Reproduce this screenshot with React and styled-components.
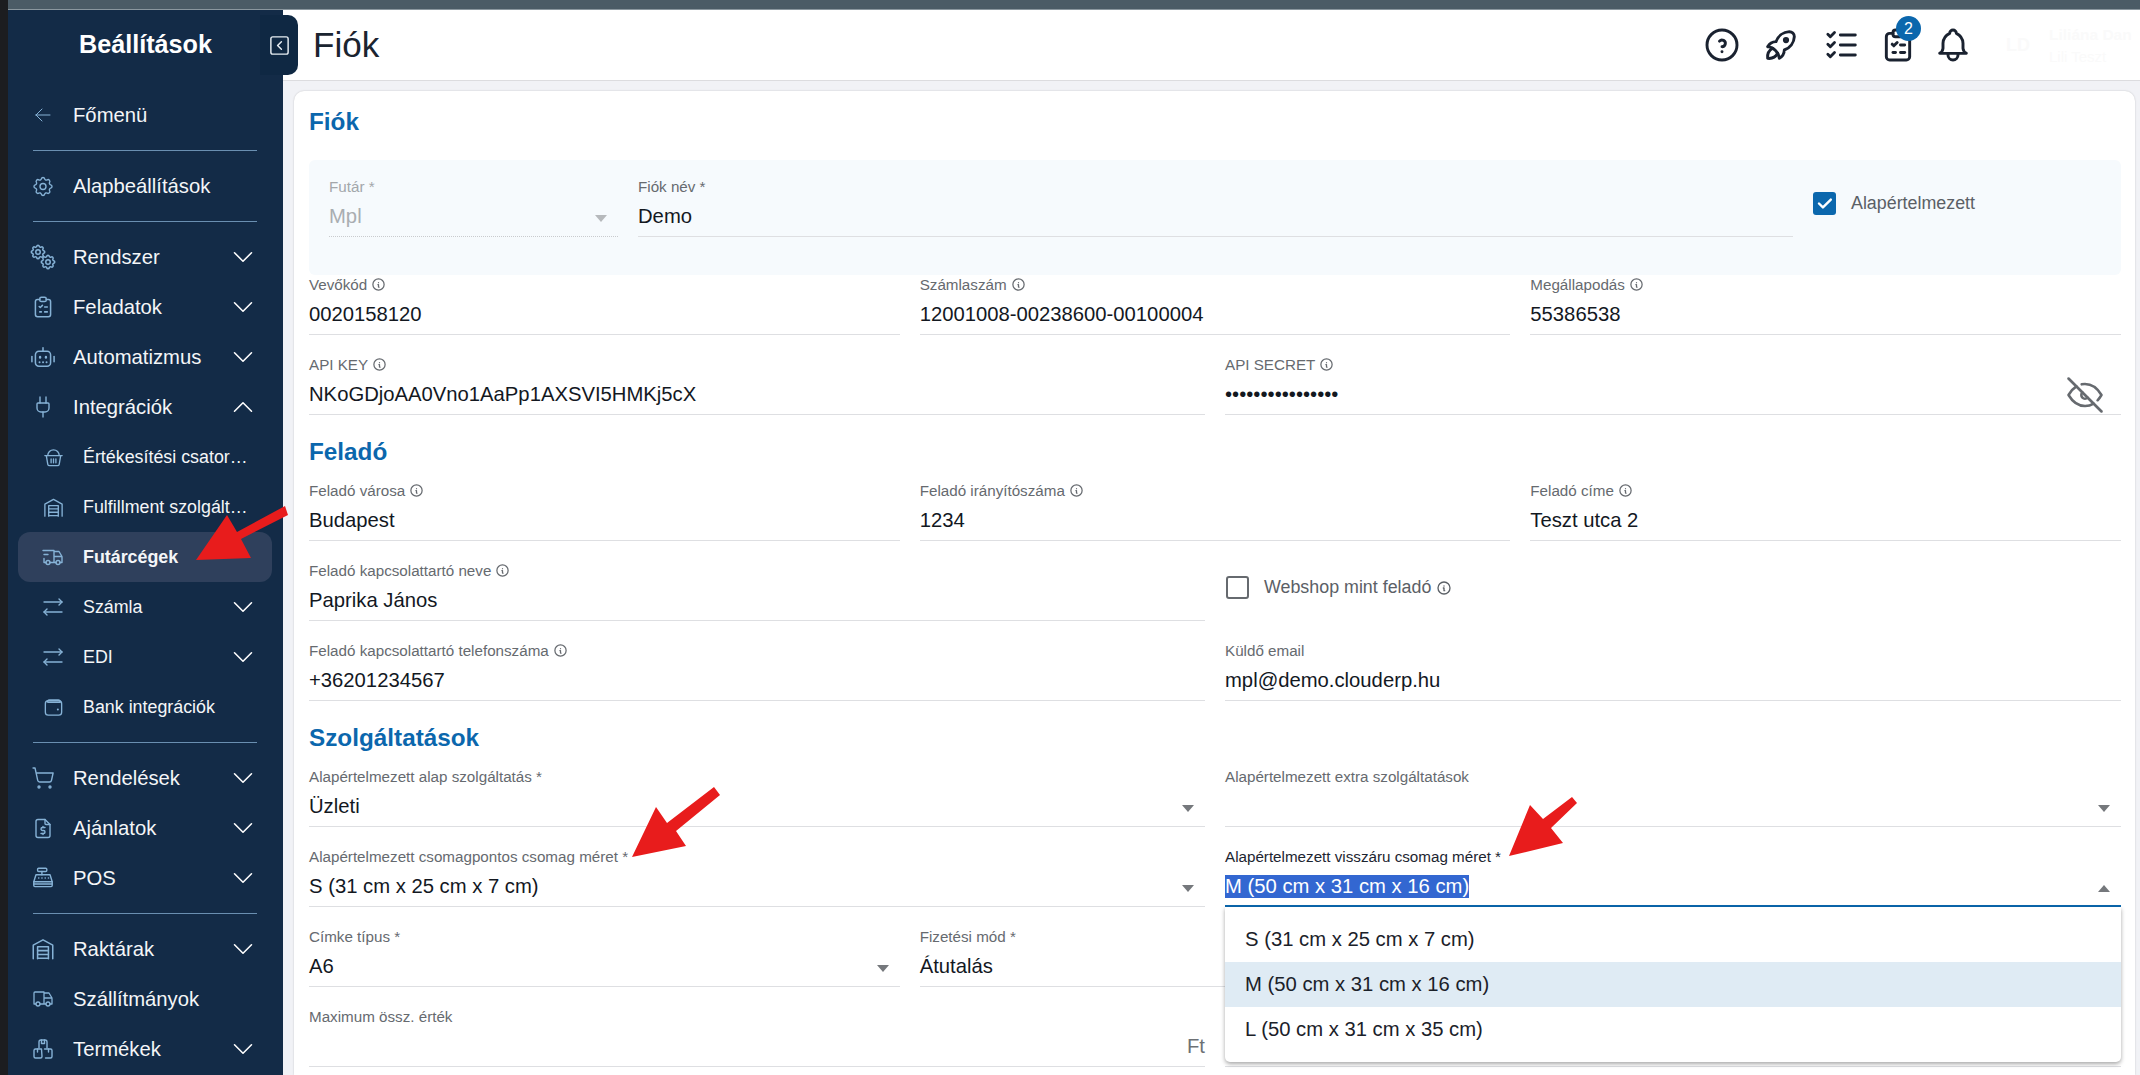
import React from "react";
import styled, { createGlobalStyle } from "styled-components";
import {
  TbSettings,
  TbFileDollar,
  TbTruckDelivery,
  TbArrowsRightLeft,
  TbTruck,
  TbHelpCircle,
  TbRocket,
  TbListCheck,
  TbBell,
  TbInfoCircle,
  TbEyeOff,
  TbCheck,
  TbArrowLeft,
} from "react-icons/tb";
import { ChevronDown, ChevronUp, Plug, ShoppingCart, SquareChevronLeft } from "lucide-react";

const GlobalStyle = createGlobalStyle`
  html, body {
    margin: 0;
    height: 100%;
    overflow: hidden;
    background: #1c1d20;
  }
  * {
    box-sizing: border-box;
  }
`;

const Shell = styled.div`
  position: relative;
  width: 2140px;
  height: 1075px;
  padding-left: 8px;
  display: flex;
  flex-direction: column;
  overflow: hidden;
  font-family: "Liberation Sans", Arial, sans-serif;
`;

const TopStrip = styled.div`
  height: 10px;
  flex: none;
  background: #4b5b66;
  border-bottom: 1px solid #8b979f;
`;

const Body = styled.div`
  flex: 1;
  display: flex;
  min-height: 0;
`;

const Sidebar = styled.aside`
  position: relative;
  width: 275px;
  flex: none;
  background: #132b47;
  color: #f4f6f8;
`;

const SideTitle = styled.div`
  height: 68px;
  display: flex;
  align-items: center;
  justify-content: center;
  font-size: 25.2px;
  font-weight: 700;
  color: #fff;
`;

const CollapseTab = styled.div`
  position: absolute;
  top: 5px;
  left: 252px;
  width: 38px;
  height: 60px;
  border-radius: 0 10px 10px 0;
  background: #0f2843;
  color: #e8eef3;
  display: flex;
  align-items: center;
  justify-content: center;
  z-index: 3;
`;

const SideNav = styled.nav`
  padding-top: 12px;
`;

const NavRow = styled.div`
  height: 50px;
  margin: 0 11px 0 10px;
  padding: 0 ${(p) => (p.$hasArrow ? "12px" : "24px")} 0 ${(p) => (p.$sub ? "23px" : "13px")};
  display: flex;
  align-items: center;
  gap: 18px;
  border-radius: 12px;
  font-size: ${(p) => (p.$sub ? "17.85px" : "20.25px")};
  font-weight: ${(p) => (p.$active ? 700 : 400)};
  background: ${(p) => (p.$active ? "#2f405c" : "transparent")};
`;

const NavIcon = styled.span`
  width: 24px;
  height: 24px;
  flex: none;
  display: flex;
  align-items: center;
  justify-content: center;
  color: #86b2d6;
`;

const NavText = styled.span`
  flex: 1;
  min-width: 0;
  white-space: nowrap;
  overflow: hidden;
  text-overflow: ellipsis;
`;

const NavArrow = styled.span`
  width: 34px;
  height: 34px;
  flex: none;
  display: flex;
  align-items: center;
  justify-content: center;
  color: #fff;
`;

const SideDivider = styled.hr`
  margin: 10px 26px 10px 25px;
  border: none;
  height: 1px;
  background: #6a8fb1;
`;

const Main = styled.main`
  flex: 1;
  min-width: 0;
  display: flex;
  flex-direction: column;
`;

const Header = styled.header`
  height: 71px;
  flex: none;
  padding-left: 30px;
  display: flex;
  align-items: center;
  background: #fff;
  border-bottom: 1px solid #dcdcdf;
`;

const PageTitle = styled.h1`
  margin: 0;
  font-size: 35.1px;
  font-weight: 400;
  color: #1b2430;
`;

const HeaderIcons = styled.div`
  margin-left: auto;
  display: flex;
  align-items: center;
  color: #1a2230;
`;

const HeaderIcon = styled.span`
  position: relative;
  width: 40px;
  height: 40px;
  margin-left: ${(p) => p.$gap || 0}px;
  display: flex;
  align-items: center;
  justify-content: center;
`;

const Badge = styled.span`
  position: absolute;
  top: -9px;
  right: -3px;
  width: 25px;
  height: 25px;
  border-radius: 50%;
  background: #0b67ad;
  color: #fff;
  font-size: 16px;
  display: flex;
  align-items: center;
  justify-content: center;
`;

const UserBox = styled.div`
  width: 134px;
  margin-left: 33px;
  display: flex;
  align-items: center;
  gap: 19px;
  color: #fafafa;
`;

const UserInitials = styled.span`
  font-size: 18px;
  font-weight: 700;
`;

const UserName = styled.div`
  font-size: 15.5px;
  font-weight: 700;
  line-height: 24px;
  white-space: nowrap;
`;

const UserCompany = styled.div`
  font-size: 15px;
  line-height: 20px;
  white-space: nowrap;
`;

const Content = styled.div`
  flex: 1;
  min-height: 0;
  padding: 10px 5px 0 11px;
  background: #f1f2f6;
`;

const Card = styled.section`
  height: 100%;
  padding: 0 14px 0 15px;
  background: #fff;
  border-radius: 10px 10px 0 0;
  box-shadow: 0 0 2px rgba(0, 0, 0, 0.2);
`;

const CardTitle = styled.h2`
  margin: 0;
  height: 69px;
  padding-bottom: 7px;
  display: flex;
  align-items: center;
  font-size: 24.3px;
  font-weight: 700;
  color: #0b67ad;
`;

const SectionTitle = styled.h2`
  margin: 0;
  padding: 25px 0 16px;
  font-size: 24.3px;
  line-height: 24px;
  font-weight: 700;
  color: #0b67ad;
`;

const Panel = styled.div`
  height: 115px;
  padding: 16px 20px;
  margin-bottom: -1px;
  display: grid;
  grid-template-columns: 289px 1155px 1fr;
  gap: 20px;
  background: #f6fafd;
  border-radius: 6px;
`;

const Row = styled.div`
  display: grid;
  grid-template-columns: repeat(${(p) => p.$cols}, 1fr);
  column-gap: 20px;
  margin-bottom: ${(p) => (p.$last ? 0 : 19)}px;
`;

const FieldBox = styled.div`
  position: relative;
  height: 61px;
`;

const Label = styled.div`
  height: 20px;
  display: flex;
  align-items: center;
  gap: 4px;
  font-size: 15.2px;
  white-space: nowrap;
  color: ${(p) => (p.$focused ? "#1d2530" : p.$disabled ? "#a3a7ab" : "#666a6f")};
`;

const ValueLine = styled.div`
  position: relative;
  height: 41px;
  padding-top: 1px;
  display: flex;
  align-items: center;
  font-size: 20.25px;
  white-space: nowrap;
  color: ${(p) => (p.$disabled ? "#a9adb1" : "#13181f")};
  border-bottom: ${(p) =>
    p.$focused ? "2px solid #0b67ad" : p.$disabled ? "1px dotted #c9cbce" : "1px solid #dedfe2"};
`;

const Selected = styled.span`
  height: 23px;
  line-height: 23px;
  background: #3367d1;
  color: #fff;
`;

const Adornment = styled.span`
  margin-left: auto;
  color: #6d7175;
`;

const Triangle = styled.span`
  position: absolute;
  right: 11px;
  top: 19px;
  width: 0;
  height: 0;
  border-left: 6px solid transparent;
  border-right: 6px solid transparent;
  border-top: ${(p) => (p.$up ? "0" : `7px solid ${p.$disabled ? "#b6b9bc" : "#75787c"}`)};
  border-bottom: ${(p) => (p.$up ? "7px solid #75787c" : "0")};
`;

const EyeButton = styled.span`
  position: absolute;
  right: 14px;
  top: -1px;
  color: #666a6f;
  display: flex;
`;

const CheckWrap = styled.label`
  display: flex;
  align-items: center;
  gap: 15px;
  font-size: 17.85px;
  color: #5b6066;
`;

const CheckBoxMark = styled.span`
  width: 23px;
  height: 23px;
  flex: none;
  border-radius: 3px;
  display: flex;
  align-items: center;
  justify-content: center;
  color: #fff;
  background: ${(p) => (p.$checked ? "#0b67ad" : "transparent")};
  border: ${(p) => (p.$checked ? "none" : "2px solid #666a6f")};
`;

const PanelCheck = styled(CheckWrap)`
  height: 23px;
  margin-top: 16px;
`;

const RowCheck = styled(CheckWrap)`
  height: 61px;
  padding: 0 0 6px 1px;
  gap: 5px;
`;

const RowCheckText = styled.span`
  margin-left: 10px;
  display: flex;
  align-items: center;
  gap: 5px;
`;

const Menu = styled.ul`
  position: absolute;
  top: 100%;
  left: 0;
  right: 0;
  margin: 0;
  padding: 10px 0;
  list-style: none;
  background: #fff;
  border-radius: 0 0 5px 5px;
  box-shadow: 0 2px 4px rgba(0, 0, 0, 0.35);
  z-index: 2;
`;

const MenuItem = styled.li`
  height: 45px;
  padding-left: 20px;
  display: flex;
  align-items: center;
  font-size: 20.25px;
  color: #1b2129;
  background: ${(p) => (p.$selected ? "#dfebf4" : "transparent")};
`;

const ArrowLayer = styled.svg`
  position: absolute;
  inset: 0;
  width: 2140px;
  height: 1075px;
  pointer-events: none;
  z-index: 5;
`;

const Line = ({ size = 24, sw = 1.5, children }) => (
  <svg
    width={size}
    height={size}
    viewBox="0 0 24 24"
    fill="none"
    stroke="currentColor"
    strokeWidth={sw}
    strokeLinecap="round"
    strokeLinejoin="round"
    style={{ flex: "none" }}
  >
    {children}
  </svg>
);

const GearsIcon = () => (
  <svg width="28" height="28" viewBox="0 0 28 28" style={{ flex: "none" }}>
    <svg x="0" y="0" width="18" height="18" viewBox="0 0 24 24">
      <TbSettings size={24} />
    </svg>
    <svg x="10" y="10" width="18" height="18" viewBox="0 0 24 24">
      <TbSettings size={24} />
    </svg>
  </svg>
);

const TaskIcon = ({ size, sw }) => (
  <Line size={size} sw={sw}>
    <path d="M9 5h-2a2 2 0 0 0 -2 2v12a2 2 0 0 0 2 2h10a2 2 0 0 0 2 -2v-12a2 2 0 0 0 -2 -2h-2" />
    <rect x="9" y="3" width="6" height="4" rx="1.5" />
    <path d="M8.5 11.5l1 1l2 -2" />
    <path d="M13.5 12h2.5" />
    <path d="M9 16.5h1.5" />
    <path d="M13.5 16.5h2.5" />
  </Line>
);

const RobotIcon = () => (
  <Line size={28} sw={1.3}>
    <rect x="5.5" y="7" width="13" height="13" rx="3" />
    <path d="M12 7v-3" />
    <path d="M2.5 11.5v4.5" />
    <path d="M21.5 11.5v4.5" />
    <path d="M9.5 12v.5" strokeWidth="2" />
    <path d="M14.5 12v.5" strokeWidth="2" />
    <path d="M9 16.5h.1M12 16.5h.1M15 16.5h.1" strokeWidth="1.6" />
  </Line>
);

const BasketIcon = () => (
  <Line size={23} sw={1.4}>
    <path d="M6 10a6 6 0 0 1 12 0" />
    <path d="M3 10h18" />
    <path d="M4.5 10l1.5 9a2 2 0 0 0 2 1.5h8a2 2 0 0 0 2 -1.5l1.5 -9" />
    <path d="M9.5 13.5v4M12 13.5v4M14.5 13.5v4" />
  </Line>
);

const WarehouseIcon = ({ size }) => (
  <Line size={size} sw={1.4}>
    <path d="M3 21v-12.500l9 -5l9 5v12.500" />
    <path d="M7 21v-11h10v11" />
    <path d="M7 13.500h10M7 17h10M7 20.500h10" />
  </Line>
);

const WalletIcon = () => (
  <Line size={23} sw={1.4}>
    <path d="M19 6.500h-13a2 2 0 0 1 0 -1.500a2 2 0 0 1 2 -1h9a2 2 0 0 1 2 2.500z" />
    <rect x="3.500" y="5" width="17" height="15" rx="3" />
    <path d="M16.500 14h.1" strokeWidth="2" />
  </Line>
);

const RegisterIcon = () => (
  <Line size={26} sw={1.3}>
    <rect x="7" y="3" width="8.500" height="3" rx="1" />
    <path d="M11 6v3" />
    <path d="M5.500 9h13l2 6.500h-17z" />
    <path d="M3.500 15.500v3.500a1 1 0 0 0 1 1h15a1 1 0 0 0 1 -1v-3.500" />
    <path d="M8 12h.1M11 12h.1M14 12h.1M17 12h.1" strokeWidth="1.5" />
    <path d="M3.500 17.500h17" />
  </Line>
);

const BoxesIcon = () => (
  <Line size={24} sw={1.4}>
    <path d="M8 11v-6a2 2 0 0 1 2 -2h4a2 2 0 0 1 2 2v6" />
    <path d="M10.500 3v3.500h3v-3.500" />
    <path d="M10.500 12h-6a1.500 1.500 0 0 0 -1.500 1.500v6a1.500 1.500 0 0 0 1.500 1.500h5a1.500 1.500 0 0 0 1.500 -1.500z" />
    <path d="M13.500 12h6a1.500 1.500 0 0 1 1.500 1.500v6a1.500 1.500 0 0 1 -1.500 1.500h-5" />
    <path d="M6.500 12v3M17.500 12v3" />
  </Line>
);

const navTop = [
  { icon: <TbArrowLeft size={36} strokeWidth={1} />, label: "Főmenü" },
  null,
  { icon: <TbSettings size={27} strokeWidth={1.4} />, label: "Alapbeállítások" },
  null,
  { icon: <GearsIcon />, label: "Rendszer", arrow: "down" },
  { icon: <TaskIcon size={26} sw={1.4} />, label: "Feladatok", arrow: "down" },
  { icon: <RobotIcon />, label: "Automatizmus", arrow: "down" },
  { icon: <Plug size={26} strokeWidth={1.4} />, label: "Integrációk", arrow: "up" },
  { icon: <BasketIcon />, label: "Értékesítési csatornák", sub: true },
  { icon: <WarehouseIcon size={23} />, label: "Fulfillment szolgáltatók", sub: true },
  { icon: <TbTruckDelivery size={27} strokeWidth={1.4} />, label: "Futárcégek", sub: true, active: true },
  { icon: <TbArrowsRightLeft size={26} strokeWidth={1.4} />, label: "Számla", sub: true, arrow: "down" },
  { icon: <TbArrowsRightLeft size={26} strokeWidth={1.4} />, label: "EDI", sub: true, arrow: "down" },
  { icon: <WalletIcon />, label: "Bank integrációk", sub: true },
  null,
  { icon: <ShoppingCart size={26} strokeWidth={1.4} />, label: "Rendelések", arrow: "down" },
  { icon: <TbFileDollar size={27} strokeWidth={1.4} />, label: "Ajánlatok", arrow: "down" },
  { icon: <RegisterIcon />, label: "POS", arrow: "down" },
  null,
  { icon: <WarehouseIcon size={26} />, label: "Raktárak", arrow: "down" },
  { icon: <TbTruck size={30} strokeWidth={1.3} />, label: "Szállítmányok" },
  { icon: <BoxesIcon />, label: "Termékek", arrow: "down" },
];

const Field = ({ label, info, value, select, disabled, children }) => (
  <FieldBox>
    <Label $disabled={disabled}>
      {label}
      {info && <TbInfoCircle size={15} />}
    </Label>
    <ValueLine $disabled={disabled}>
      {value}
      {select && <Triangle $disabled={disabled} />}
      {children}
    </ValueLine>
  </FieldBox>
);

export default function App() {
  return (
    <Shell>
      <GlobalStyle />
      <TopStrip />
      <Body>
        <Sidebar>
          <SideTitle>Beállítások</SideTitle>
          <CollapseTab>
            <SquareChevronLeft size={23} strokeWidth={1.5} />
          </CollapseTab>
          <SideNav>
            {navTop.map((item, i) =>
              item ? (
                <NavRow key={i} $sub={item.sub} $active={item.active} $hasArrow={!!item.arrow}>
                  <NavIcon>{item.icon}</NavIcon>
                  <NavText>{item.label}</NavText>
                  {item.arrow && (
                    <NavArrow>
                      {item.arrow === "up" ? (
                        <ChevronUp size={34} strokeWidth={1.1} />
                      ) : (
                        <ChevronDown size={34} strokeWidth={1.1} />
                      )}
                    </NavArrow>
                  )}
                </NavRow>
              ) : (
                <SideDivider key={i} />
              )
            )}
          </SideNav>
        </Sidebar>
        <Main>
          <Header>
            <PageTitle>Fiók</PageTitle>
            <HeaderIcons>
              <HeaderIcon>
                <TbHelpCircle size={40} strokeWidth={1.75} />
              </HeaderIcon>
              <HeaderIcon $gap={19}>
                <TbRocket size={40} strokeWidth={1.75} />
              </HeaderIcon>
              <HeaderIcon $gap={21}>
                <TbListCheck size={42} strokeWidth={1.7} />
              </HeaderIcon>
              <HeaderIcon $gap={16}>
                <TaskIcon size={40} sw={1.75} />
                <Badge>2</Badge>
              </HeaderIcon>
              <HeaderIcon $gap={15}>
                <TbBell size={40} strokeWidth={1.75} />
              </HeaderIcon>
            </HeaderIcons>
            <UserBox>
              <UserInitials>LD</UserInitials>
              <div>
                <UserName>Liliána Dan</UserName>
                <UserCompany>Lili Teszt</UserCompany>
              </div>
            </UserBox>
          </Header>
          <Content>
            <Card>
              <CardTitle>Fiók</CardTitle>
              <Panel>
                <Field label="Futár *" value="Mpl" select disabled />
                <Field label="Fiók név *" value="Demo" />
                <PanelCheck>
                  <CheckBoxMark $checked>
                    <TbCheck size={19} strokeWidth={3} />
                  </CheckBoxMark>
                  Alapértelmezett
                </PanelCheck>
              </Panel>
              <Row $cols={3}>
                <Field label="Vevőkód" info value="0020158120" />
                <Field label="Számlaszám" info value="12001008-00238600-00100004" />
                <Field label="Megállapodás" info value="55386538" />
              </Row>
              <Row $cols={2} $last>
                <Field label="API KEY" info value="NKoGDjoAA0Vno1AaPp1AXSVI5HMKj5cX" />
                <Field label="API SECRET" info value="••••••••••••••••">
                  <EyeButton>
                    <TbEyeOff size={44} strokeWidth={1.4} />
                  </EyeButton>
                </Field>
              </Row>
              <SectionTitle>Feladó</SectionTitle>
              <Row $cols={3}>
                <Field label="Feladó városa" info value="Budapest" />
                <Field label="Feladó irányítószáma" info value="1234" />
                <Field label="Feladó címe" info value="Teszt utca 2" />
              </Row>
              <Row $cols={2}>
                <Field label="Feladó kapcsolattartó neve" info value="Paprika János" />
                <RowCheck>
                  <CheckBoxMark />
                  <RowCheckText>
                    Webshop mint feladó
                    <TbInfoCircle size={16} />
                  </RowCheckText>
                </RowCheck>
              </Row>
              <Row $cols={2} $last>
                <Field label="Feladó kapcsolattartó telefonszáma" info value="+36201234567" />
                <Field label="Küldő email" value="mpl@demo.clouderp.hu" />
              </Row>
              <SectionTitle>Szolgáltatások</SectionTitle>
              <Row $cols={2}>
                <Field label="Alapértelmezett alap szolgáltatás *" value="Üzleti" select />
                <Field label="Alapértelmezett extra szolgáltatások" select />
              </Row>
              <Row $cols={2}>
                <Field label="Alapértelmezett csomagpontos csomag méret *" value="S (31 cm x 25 cm x 7 cm)" select />
                <FieldBox>
                  <Label $focused>Alapértelmezett visszáru csomag méret *</Label>
                  <ValueLine $focused>
                    <Selected>M (50 cm x 31 cm x 16 cm)</Selected>
                    <Triangle $up />
                  </ValueLine>
                  <Menu>
                    <MenuItem>S (31 cm x 25 cm x 7 cm)</MenuItem>
                    <MenuItem $selected>M (50 cm x 31 cm x 16 cm)</MenuItem>
                    <MenuItem>L (50 cm x 31 cm x 35 cm)</MenuItem>
                  </Menu>
                </FieldBox>
              </Row>
              <Row $cols={3}>
                <Field label="Címke típus *" value="A6" select />
                <Field label="Fizetési mód *" value="Átutalás" select />
                <div />
              </Row>
              <Row $cols={2}>
                <Field label="Maximum össz. érték">
                  <Adornment>Ft</Adornment>
                </Field>
                <Field label="" />
              </Row>
            </Card>
          </Content>
        </Main>
      </Body>
      <ArrowLayer viewBox="0 0 2140 1075">
        <polygon fill="#e81c1c" points="196,560 227,515 237,532 285,506 288,515 241,539 251,558" />
        <polygon fill="#e81c1c" points="632,857 656,807 667,823 714,787 720,795 676,831 686,846" />
        <polygon fill="#e81c1c" points="1509,856 1530,805 1543,819 1572,797 1577,803 1551,828 1563,843" />
      </ArrowLayer>
    </Shell>
  );
}
